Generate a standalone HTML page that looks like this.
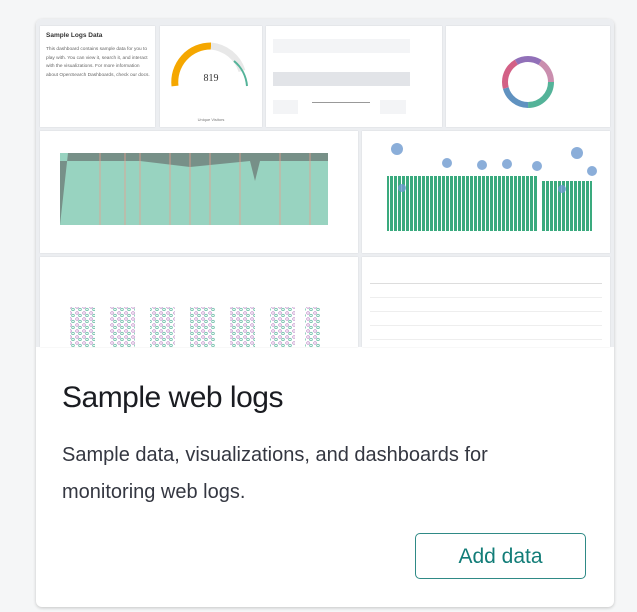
<!DOCTYPE html>
<html><head><style>
body{margin:0;width:637px;height:612px;background:#f5f6f7;font-family:"Liberation Sans",sans-serif;position:relative;overflow:hidden}
.card{position:absolute;left:36px;top:19px;width:578px;height:588px;background:#fff;border-radius:6px;box-shadow:0 1px 3px rgba(0,0,0,.2);overflow:hidden}
.prev{position:absolute;left:0;top:0;width:578px;height:328px;background:#eceef1}
.p{position:absolute;background:#fff;box-shadow:0 0 1px rgba(0,0,0,.15)}
h1{position:absolute;left:26px;top:362px;margin:0;font-weight:400;font-size:30px;color:#1a1c21;letter-spacing:-.5px}
.d{position:absolute;left:26px;top:418px;width:520px;font-size:20px;line-height:37px;color:#343741}
.btn{position:absolute;left:379px;top:514px;width:171px;height:46px;border:1.5px solid #2f8a86;border-radius:5px;color:#127d78;font-size:21px;text-align:center;line-height:46px;box-sizing:border-box}
</style></head><body>
<div class="card">
<div class="prev">
 <div class="p" style="left:4px;top:7px;width:115px;height:101px">
  <div style="position:absolute;left:6px;top:6px;font-size:6.5px;font-weight:bold;color:#333">Sample Logs Data</div>
  <div style="position:absolute;left:6px;top:20px;width:106px;font-size:4.8px;line-height:8.5px;color:#666">This dashboard contains sample data for you to play with. You can view it, search it, and interact with the visualizations. For more information about OpenSearch Dashboards, check our docs.</div>
 </div>
 <div class="p" style="left:124px;top:7px;width:102px;height:101px">
  <svg width="102" height="101"><path d="M15 60 A36 36 0 0 1 51 20" stroke="#f5a700" stroke-width="7" fill="none"/><path d="M51 20 A36 36 0 0 1 82 45" stroke="#e8e8e8" stroke-width="7" fill="none"/><path d="M74 35 A36 36 0 0 1 87 60" stroke="#54b399" stroke-width="2" fill="none"/>
  <text x="51" y="55" font-size="10" text-anchor="middle" fill="#333" font-family="Liberation Serif">819</text>
  <text x="51" y="95" font-size="4" text-anchor="middle" fill="#777">Unique Visitors</text></svg>
 </div>
 <div class="p" style="left:230px;top:7px;width:176px;height:101px">
  <div style="position:absolute;left:7px;top:13px;width:137px;height:14px;background:#f3f4f6"></div>
  <div style="position:absolute;left:7px;top:46px;width:137px;height:14px;background:#e2e4e8"></div>
  <div style="position:absolute;left:7px;top:74px;width:25px;height:14px;background:#f3f4f6"></div>
  <div style="position:absolute;left:46px;top:76px;width:58px;height:1px;background:#999"></div>
  <div style="position:absolute;left:114px;top:74px;width:26px;height:14px;background:#f3f4f6"></div>
 </div>
 <div class="p" style="left:410px;top:7px;width:164px;height:101px">
  <svg width="164" height="101"><circle cx="82" cy="56" r="23" fill="none" stroke="#54b399" stroke-width="6" stroke-dasharray="36 200"/><circle cx="82" cy="56" r="23" fill="none" stroke="#6092c0" stroke-width="6" stroke-dasharray="0 36 30 200"/><circle cx="82" cy="56" r="23" fill="none" stroke="#d36086" stroke-width="6" stroke-dasharray="0 66 30 200"/><circle cx="82" cy="56" r="23" fill="none" stroke="#9170b8" stroke-width="6" stroke-dasharray="0 96 25 200"/><circle cx="82" cy="56" r="23" fill="none" stroke="#ca8eae" stroke-width="6" stroke-dasharray="0 121 24 200"/></svg>
 </div>
 <div class="p" style="left:4px;top:112px;width:318px;height:122px">
  <svg width="318" height="122"><rect x="20" y="22" width="268" height="72" fill="#98d3c0"/><path d="M20 94 L28 22 L288 22 L288 30 L220 30 L215 50 L210 30 L150 36 L100 30 L20 30Z" fill="#6a7470" opacity=".7"/>
  <g stroke="#e7a08f" stroke-width=".8"><line x1="60" y1="22" x2="60" y2="94"/><line x1="85" y1="22" x2="85" y2="94"/><line x1="100" y1="22" x2="100" y2="94"/><line x1="130" y1="22" x2="130" y2="94"/><line x1="150" y1="22" x2="150" y2="94"/><line x1="170" y1="22" x2="170" y2="94"/><line x1="200" y1="22" x2="200" y2="94"/><line x1="240" y1="22" x2="240" y2="94"/><line x1="270" y1="22" x2="270" y2="94"/></g></svg>
 </div>
 <div class="p" style="left:326px;top:112px;width:248px;height:122px">
  <svg width="248" height="122"><defs><pattern id="b" width="4" height="122" patternUnits="userSpaceOnUse"><rect width="3" height="122" fill="#3aaa7e"/></pattern></defs><rect x="25" y="45" width="150" height="55" fill="url(#b)"/><rect x="180" y="50" width="50" height="50" fill="url(#b)"/><g fill="#6f9ad0" opacity=".8"><circle cx="35" cy="18" r="6"/><circle cx="85" cy="32" r="5"/><circle cx="120" cy="34" r="5"/><circle cx="145" cy="33" r="5"/><circle cx="175" cy="35" r="5"/><circle cx="215" cy="22" r="6"/><circle cx="230" cy="40" r="5"/><circle cx="40" cy="57" r="4"/><circle cx="200" cy="58" r="4"/></g></svg>
 </div>
 <div class="p" style="left:4px;top:238px;width:318px;height:90px">
  <svg width="318" height="90"><defs><pattern id="s" width="7" height="6" patternUnits="userSpaceOnUse"><circle cx="2" cy="2" r="1.3" fill="none" stroke="#b57bc0" stroke-width=".7"/><circle cx="5" cy="4.5" r="1.3" fill="none" stroke="#54b399" stroke-width=".7"/></pattern></defs><g fill="url(#s)"><rect x="30" y="50" width="25" height="40"/><rect x="70" y="50" width="25" height="40"/><rect x="110" y="50" width="25" height="40"/><rect x="150" y="50" width="25" height="40"/><rect x="190" y="50" width="25" height="40"/><rect x="230" y="50" width="25" height="40"/><rect x="265" y="50" width="15" height="40"/></g></svg>
 </div>
 <div class="p" style="left:326px;top:238px;width:248px;height:90px">
  <div style="position:absolute;left:8px;top:26px;width:232px;border-top:1px solid #ddd"></div>
  <div style="position:absolute;left:8px;top:40px;width:232px;border-top:1px solid #eee"></div>
  <div style="position:absolute;left:8px;top:54px;width:232px;border-top:1px solid #eee"></div>
  <div style="position:absolute;left:8px;top:68px;width:232px;border-top:1px solid #eee"></div>
  <div style="position:absolute;left:8px;top:82px;width:232px;border-top:1px solid #eee"></div>
 </div>
</div>
<h1>Sample web logs</h1>
<div class="d">Sample data, visualizations, and dashboards for monitoring web logs.</div>
<div class="btn">Add data</div>
</div>
</body></html>
